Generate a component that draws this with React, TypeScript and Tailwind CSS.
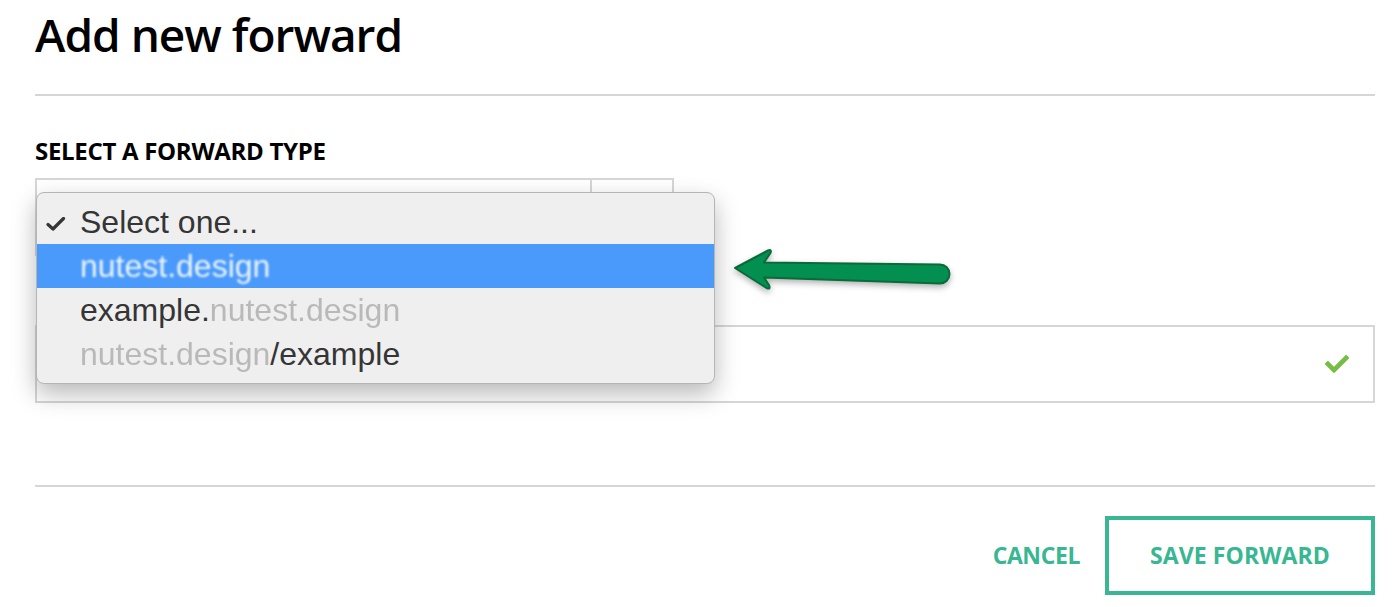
import { FaCheck } from "react-icons/fa";

const menuItems = [
  { key: "select", selected: true },
  { key: "root", highlighted: true },
  { key: "sub" },
  { key: "path" },
];

function ForwardArrow() {
  return (
    <svg
      className="absolute left-[690px] top-[62px] drop-shadow-[0_3px_3px_rgba(0,0,0,0.3)]"
      width="235"
      height="60"
      viewBox="0 0 235 60"
    >
      <path
        d="M8 26 L41 8.5 Q45 7 43.5 11 L37 20.5 L213 22.5 A9.5 9.5 0 0 1 213 41.5 L37 35.5 L42 43 Q44 48 39.5 46 Z"
        fill="#028f50"
        stroke="#0b6a3a"
        strokeWidth="2"
        strokeLinejoin="round"
      />
    </svg>
  );
}

function MenuRow({ item }: { item: (typeof menuItems)[number] }) {
  if (item.key === "select") {
    return (
      <div className="relative flex h-[44px] items-center pl-[43px] text-[#353535]">
        <svg className="absolute left-[9px] top-[17px]" width="20" height="14" viewBox="0 0 20 14">
          <path d="M2 7.5 L7 12 L17.5 1.5" fill="none" stroke="#353535" strokeWidth="3.2" strokeLinecap="round" strokeLinejoin="round" />
        </svg>
        Select one...
      </div>
    );
  }
  if (item.key === "root") {
    return (
      <div className="flex h-[44px] items-center bg-[#4a9afb] pl-[43px]">
        <span className="text-white/90 blur-[0.8px]">nutest.design</span>
      </div>
    );
  }
  if (item.key === "sub") {
    return (
      <div className="flex h-[44px] items-center pl-[43px] text-[#353535]">
        example.
        <span className="text-[#b9b9b9] blur-[0.7px]">nutest.design</span>
      </div>
    );
  }
  return (
    <div className="flex h-[44px] items-center pl-[43px] text-[#353535]">
      <span className="text-[#b9b9b9] blur-[0.7px]">nutest.design</span>
      /example
    </div>
  );
}

export default function App() {
  return (
    <main className="min-h-screen bg-white pl-[35px] pr-[17px] font-['Open_Sans',sans-serif] text-black">
      <h1 className="pt-[11px] text-[46px] font-semibold leading-none tracking-[-1px]">Add new forward</h1>
      <div className="mt-[37px] h-[2px] bg-[#d6d6d6]" />

      <label className="mt-[43px] block text-[24px] font-bold leading-none tracking-[-0.3px]">SELECT A FORWARD TYPE</label>

      <div className="relative mt-[15px] flex h-[78px] w-[639px] border-2 border-[#d6d6d6]">
        <div className="flex-1" />
        <div className="w-[82px] border-l-2 border-[#d6d6d6]" />

        <div className="absolute left-[-1px] top-[12px] z-10 w-[679px] overflow-hidden rounded-[8px] border border-[#b5b5b5] bg-[#efefef] py-[7px] font-['Liberation_Sans',sans-serif] text-[32px] leading-none shadow-[0_10px_24px_rgba(0,0,0,0.28)]">
          {menuItems.map((item) => (
            <MenuRow key={item.key} item={item} />
          ))}
        </div>

        <ForwardArrow />
      </div>

      <div className="mt-[69px] flex h-[78px] items-center justify-end border-2 border-[#d6d6d6] pr-[24px]">
        <FaCheck className="text-[#77bd43]" size={24} />
      </div>

      <div className="mt-[82px] h-[2px] bg-[#d6d6d6]" />

      <div className="mt-[29px] flex items-center justify-end gap-[25px] text-[23px] font-bold text-[#38b792]">
        <button className="leading-none tracking-[-0.4px]">CANCEL</button>
        <button className="flex h-[79px] w-[270px] items-center justify-center border-4 border-[#38b792] leading-none tracking-[0.1px]">
          SAVE FORWARD
        </button>
      </div>
    </main>
  );
}
